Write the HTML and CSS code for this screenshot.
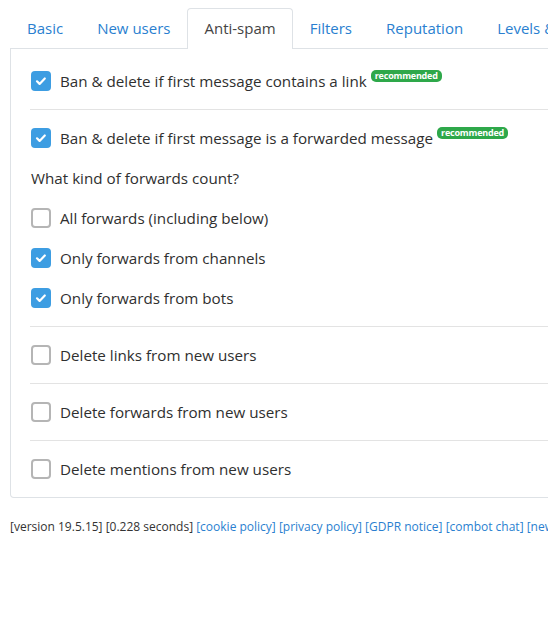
FILE: index.html
```html
<!DOCTYPE html>
<html>
<head>
<meta charset="utf-8">
<link rel="stylesheet" href="styles.css">
</head>
<body>
<div class="page">
  <ul class="tabs">
    <li class="tab">Basic</li>
    <li class="tab">New users</li>
    <li class="tab active">Anti-spam</li>
    <li class="tab">Filters</li>
    <li class="tab">Reputation</li>
    <li class="tab">Levels &amp; rewards</li>
  </ul>
  <div class="card">
    <label class="item"><span class="box on"><svg viewBox="0 0 20 20"><path d="M6 10.3l2.6 2.6 5.2-5.4" fill="none" stroke="#fff" stroke-width="2.2" stroke-linecap="round" stroke-linejoin="round"/></svg></span>Ban &amp; delete if first message contains a link <span class="badge">recommended</span></label>
    <hr class="sep">
    <label class="item"><span class="box on"><svg viewBox="0 0 20 20"><path d="M6 10.3l2.6 2.6 5.2-5.4" fill="none" stroke="#fff" stroke-width="2.2" stroke-linecap="round" stroke-linejoin="round"/></svg></span>Ban &amp; delete if first message is a forwarded message <span class="badge">recommended</span></label>
    <div class="item question">What kind of forwards count?</div>
    <label class="item"><span class="box"></span>All forwards (including below)</label>
    <label class="item"><span class="box on"><svg viewBox="0 0 20 20"><path d="M6 10.3l2.6 2.6 5.2-5.4" fill="none" stroke="#fff" stroke-width="2.2" stroke-linecap="round" stroke-linejoin="round"/></svg></span>Only forwards from channels</label>
    <label class="item"><span class="box on"><svg viewBox="0 0 20 20"><path d="M6 10.3l2.6 2.6 5.2-5.4" fill="none" stroke="#fff" stroke-width="2.2" stroke-linecap="round" stroke-linejoin="round"/></svg></span>Only forwards from bots</label>
    <hr class="sep">
    <label class="item"><span class="box"></span>Delete links from new users</label>
    <hr class="sep">
    <label class="item"><span class="box"></span>Delete forwards from new users</label>
    <hr class="sep">
    <label class="item"><span class="box"></span>Delete mentions from new users</label>
  </div>
  <div class="footer">[version 19.5.15] [0.228 seconds] <a>[cookie policy]</a> <a>[privacy policy]</a> <a>[GDPR notice]</a> <a>[combot chat]</a> <a>[news channel]</a></div>
</div>
</body>
</html>
```
FILE: styles.css
```css
html, body {
  margin: 0;
  padding: 0;
  background: #fff;
  overflow: hidden;
}
body {
  font-family: "Open Sans", "Noto Sans", sans-serif;
  color: #333;
}
.page {
  width: 720px;
  padding: 8px 0 0 10px;
}
.tabs {
  list-style: none;
  margin: 0;
  padding: 0;
  display: flex;
  white-space: nowrap;
  border-bottom: 1px solid #dee2e6;
}
.tab {
  height: 39px;
  line-height: 39px;
  padding: 0 16px;
  border: 1px solid transparent;
  border-bottom: 0;
  border-radius: 4px 4px 0 0;
  color: #2a7fd0;
  font-size: 15px;
  margin-bottom: -1px;
}
.tab.active {
  color: #444;
  border-color: #dee2e6;
  background: #fff;
  height: 40px;
}
.card {
  border: 1px solid #dee2e6;
  border-top: 0;
  border-radius: 0 0 4px 4px;
  padding: 20px 20px 0 20px;
}
.item {
  display: flex;
  align-items: center;
  height: 24px;
  margin-bottom: 16px;
  font-size: 15.2px;
  white-space: nowrap;
  color: #2f2f2f;
}
.box {
  width: 20px;
  height: 20px;
  box-sizing: border-box;
  border: 2px solid #b5b5b5;
  border-radius: 4px;
  margin-right: 9px;
  flex: none;
  display: block;
}
.box.on {
  border: 0;
  background: #3d9de2;
}
.box svg {
  display: block;
  width: 20px;
  height: 20px;
}
.badge {
  align-self: flex-start;
  margin-top: 1px;
  margin-left: 4px;
  background: #2ea84a;
  color: #fff;
  font-size: 9px;
  font-weight: 700;
  line-height: 12px;
  padding: 0 4px;
  border-radius: 5px;
  letter-spacing: -0.2px;
}
.sep {
  border: 0;
  border-top: 1px solid #e3e3e3;
  margin: 0 0 16px -1px;
}
.footer {
  margin-top: 20px;
  font-size: 12px;
  color: #333;
  white-space: nowrap;
}
.footer a {
  color: #2a7fd0;
}
```
